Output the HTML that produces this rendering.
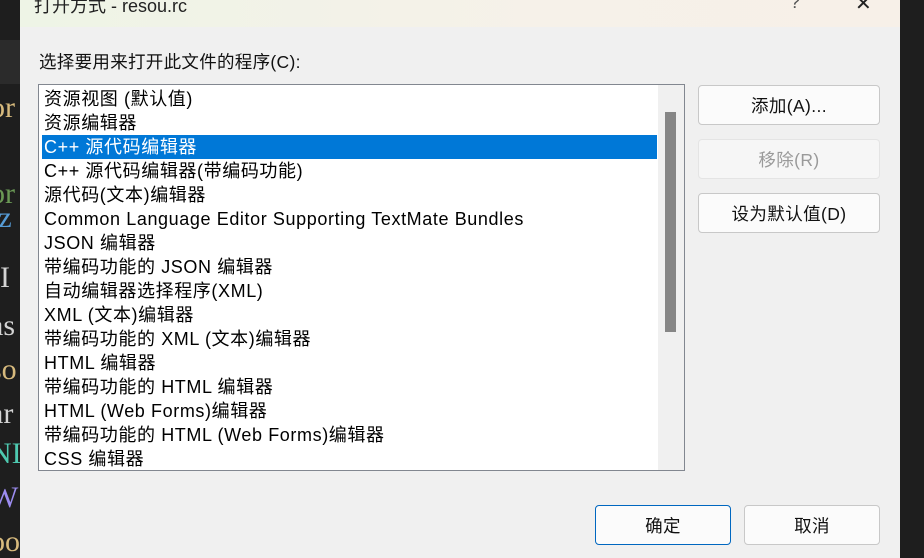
<!DOCTYPE html>
<html><head><meta charset="utf-8"><style>
*{margin:0;padding:0;box-sizing:border-box}
body{width:924px;height:558px;overflow:hidden;background:#1e1e1e;position:relative;font-family:"Liberation Sans","Noto Sans CJK SC",sans-serif}
.code{position:absolute;left:-10px;font-family:"Liberation Serif","Noto Serif CJK SC",serif;font-size:30px;line-height:24px}
.dlg{position:absolute;left:20px;top:0;width:880px;height:558px;background:#f0f0f0}
.title{position:absolute;left:0;top:0;width:880px;height:27px;background:linear-gradient(90deg,#eef4e6,#f6f1e9 60%,#f7f0e8)}
.title span{position:absolute;top:-8px;font-size:18px;color:#222}
.lbl{position:absolute;left:19px;top:49px;font-size:17.5px;color:#111;letter-spacing:0.3px}
.list{position:absolute;left:18px;top:84px;width:647px;height:387px;background:#fff;border:1px solid #828790;overflow:hidden}
.row{position:absolute;left:3px;height:24px;width:615px;font-size:18px;line-height:25px;padding-left:2px;color:#000;white-space:nowrap;letter-spacing:0.6px}
.sel{background:#0078d7;color:#fff}
.track{position:absolute;left:619px;top:0;width:27px;height:385px;background:#f0f0f0}
.thumb{position:absolute;left:7px;top:27px;width:11px;height:220px;background:#868686}
.btn{position:absolute;background:#fbfbfb;border:1px solid #c8c8c8;border-radius:4px;font-size:17.5px;text-align:center;color:#111;letter-spacing:0.4px}
</style></head><body>
<div class="code" style="top:96px;color:#d7ba7d">or</div>
<div class="code" style="top:182px;color:#6a9955">or</div>
<div class="code" style="top:206px;color:#569cd6">iz</div>
<div class="code" style="top:266px;color:#d4d4d4">(I</div>
<div class="code" style="top:314px;color:#d4d4d4">as</div>
<div class="code" style="top:358px;color:#d7ba7d">so</div>
<div class="code" style="top:402px;color:#d4d4d4">ar</div>
<div class="code" style="top:442px;color:#4ec9b0">NI</div>
<div class="code" style="top:486px;color:#9c8cf0">W</div>
<div class="code" style="top:530px;color:#d7ba7d">oo</div>
<div style="position:absolute;left:0;top:40px;width:20px;height:44px;background:#2b2b2b"></div>
<div class="dlg">
<div class="title"><span style="left:14px">打开方式 - resou.rc</span><span style="left:770px;color:#555">?</span><span style="left:835px;font-size:20px;top:-9px">✕</span></div>
<div class="lbl">选择要用来打开此文件的程序(C):</div>
<div class="list">
<div class="row" style="top:2px">资源视图 (默认值)</div>
<div class="row" style="top:26px">资源编辑器</div>
<div class="row sel" style="top:50px">C++ 源代码编辑器</div>
<div class="row" style="top:74px">C++ 源代码编辑器(带编码功能)</div>
<div class="row" style="top:98px">源代码(文本)编辑器</div>
<div class="row" style="top:122px">Common Language Editor Supporting TextMate Bundles</div>
<div class="row" style="top:146px">JSON 编辑器</div>
<div class="row" style="top:170px">带编码功能的 JSON 编辑器</div>
<div class="row" style="top:194px">自动编辑器选择程序(XML)</div>
<div class="row" style="top:218px">XML (文本)编辑器</div>
<div class="row" style="top:242px">带编码功能的 XML (文本)编辑器</div>
<div class="row" style="top:266px">HTML 编辑器</div>
<div class="row" style="top:290px">带编码功能的 HTML 编辑器</div>
<div class="row" style="top:314px">HTML (Web Forms)编辑器</div>
<div class="row" style="top:338px">带编码功能的 HTML (Web Forms)编辑器</div>
<div class="row" style="top:362px">CSS 编辑器</div>
<div class="track"><div class="thumb"></div></div>
</div>
<div class="btn" style="left:678px;top:85px;width:182px;height:40px;line-height:40px">添加(A)...</div>
<div class="btn" style="left:678px;top:139px;width:182px;height:40px;line-height:40px;color:#9a9a9a;border-color:#e4e4e4;background:#f6f6f6">移除(R)</div>
<div class="btn" style="left:678px;top:193px;width:182px;height:40px;line-height:40px">设为默认值(D)</div>
<div class="btn" style="left:575px;top:505px;width:136px;height:40px;line-height:40px;border-color:#0067c0">确定</div>
<div class="btn" style="left:724px;top:505px;width:136px;height:40px;line-height:40px">取消</div>
</div>
</body></html>
